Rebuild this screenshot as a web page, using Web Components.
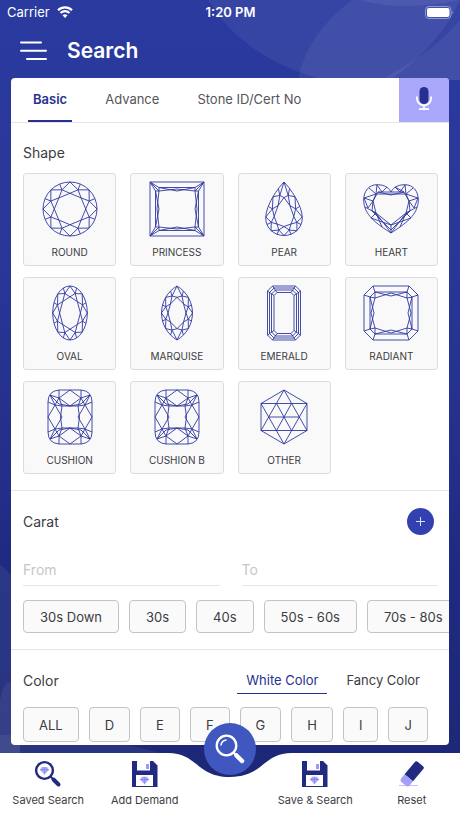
<!DOCTYPE html>
<html lang="en">
<head>
<meta charset="utf-8">
<meta name="viewport" content="width=device-width, initial-scale=1">
<title>Search</title>
<style>
  html, body { height:100%; margin:0; }
  body {
    --navy:#26318f; --ink:#3c3c42; --line:#e6e6ea;
    font-family:Inter, "Liberation Sans", sans-serif; font-size:14px; color:var(--ink);
    background:#1d2876;
  }
</style>
</head>
<body>
<search-app></search-app>

<script>
(function () {
  /* ---- gem outlines, all on a 56x56 box ---- */
  const pt = p => p[0].toFixed(1) + ' ' + p[1].toFixed(1);
  const line = (...p) => 'M' + p.map(pt).join('L');
  const lerp = (c, p, k) => [c[0] + (p[0] - c[0]) * k, c[1] + (p[1] - c[1]) * k];

  // 16 girdle points -> kites, star facets and table
  function brilliant(girdle, c, table) {
    let d = '';
    for (let i = 0; i < 16; i += 2) {
      const next = (i + 2) % 16;
      const m = lerp(c, girdle[i + 1], (1 + table) / 2 - .02);
      const a = lerp(c, girdle[i], table), b = lerp(c, girdle[next], table);
      d += line(girdle[i], m, girdle[next]) + line(a, m, b) + line(a, b) + line(m, girdle[i + 1]);
    }
    return d;
  }
  function ellipse(rx, ry) {
    return Array.from({ length: 16 }, (_, i) => {
      const t = i * Math.PI / 8;
      return [28 + rx * Math.sin(t), 28 - ry * Math.cos(t)];
    });
  }
  const mirror = right => right.concat(right.slice(1, -1).reverse().map(p => [56 - p[0], p[1]]));
  const marquise = mirror(Array.from({ length: 9 }, (_, i) => {
    const t = (-60 + i * 15) * Math.PI / 180;
    return [12.3 + 31.3 * Math.cos(t), 28 + 31.2 * Math.sin(t)];
  }));
  const pear = mirror([[28,1],[33.6,7.5],[39,15.8],[43.5,25.5],[46.2,36],[45,43.5],[41,49.8],[35,53.6],[28,54.5]]);
  const octagon = (x, y, k) => {
    const X = 56 - x, Y = 56 - y;
    return `M${x + k} ${y}H${X - k}L${X} ${y + k}V${Y - k}L${X - k} ${Y}H${x + k}L${x} ${Y - k}V${y + k}Z`;
  };

  const CUSHION = `M17 1H39Q50 2 50 13V43Q50 54 39 55H17Q6 54 6 43V13Q6 2 17 1Z
    M28 1 17 9 28 17 39 9ZM28 55 17 47 28 39 39 47Z
    M6 28 13 16 20 28 13 40ZM50 28 43 16 36 28 43 40Z
    M20 17H36L37.5 28 36 39H20L18.5 28Z
    M28 17 17 15 8 6 13 16 20 17 17 9 17 1M28 17 39 15 48 6 43 16 36 17 39 9 39 1
    M28 39 17 41 8 50 13 40 20 39 17 47 17 55M28 39 39 41 48 50 43 40 36 39 39 47 39 55
    M6 13 13 16 17 9 8 6M50 13 43 16 39 9 48 6M6 43 13 40 17 47 8 50M50 43 43 40 39 47 48 50`;

  const GEMS = {
    round: 'M28 1A27 27 0 1 1 28 55A27 27 0 1 1 28 1' + brilliant(ellipse(27, 27), [28, 28], .58),
    princess: `M1 1H55V55H1ZM10 6.500H46M10 49.500H46M6.500 10V46M49.500 10V46
      M1 1 6.500 10M1 1 10 6.500M55 1 46 6.500M55 1 49.500 10M1 55 6.500 46M1 55 10 49.500M55 55 46 49.500M55 55 49.500 46
      M1 1 10 10M55 1 46 10M1 55 10 46M55 55 46 46
      M10 6.500 10 10 28 8 46 10 46 6.500M10 49.500 10 46 28 48 46 46 46 49.500
      M6.500 10 10 10 8 28 10 46 6.500 46M49.500 10 46 10 48 28 46 46 49.500 46
      M10 6.500 28 10 46 6.500M10 49.500 28 46 46 49.500M6.500 10 10 28 6.500 46M49.500 10 46 28 49.500 46`,
    pear: 'M28 1C34 7 46.300 24 46.300 37C46.300 47 38 54.500 28 54.500C18 54.500 9.700 47 9.700 37C9.700 24 22 7 28 1Z'
      + brilliant(pear, [28, 35], .54),
    heart: `M28 11C31 5 37 3.700 42 3.700C50 3.700 55.300 10 55.300 19C55.300 34 42 43 28 52C14 43 .7 34 .7 19C.7 10 6 3.700 14 3.700C19 3.700 25 5 28 11Z
      M13 13H43L46 20 43 32 28 44 13 32 10 20Z
      M28 11 15 11 10 20 1 17 13 13 6 7M13 13 14 4 19 11 24 6M15 11 28 14 41 11 32 6 37 11 42 4 43 13 50 7
      M28 11 41 11 46 20 55 17 43 13
      M1 17 5 27 10 20M55 17 51 27 46 20M2 26 13 32 8 37M54 26 43 32 48 37
      M10 20 9 30 28 49 47 30 46 20M13 32 19 46M43 32 37 46
      M13 32 28 52 43 32M9 30 13 32M47 30 43 32M28 44V52M8 37 28 44 48 37`,
    oval: 'M28 1A17.300 27 0 1 1 28 55A17.300 27 0 1 1 28 1' + brilliant(ellipse(17.3, 27), [28, 28], .6),
    marquise: 'M28 1A31.300 31.300 0 0 1 28 55A31.300 31.300 0 0 1 28 1' + brilliant(marquise, [28, 28], .58),
    emerald: octagon(11.5, 1, 5) + octagon(13.5, 3, 4.5) + octagon(15.5, 5, 4) + octagon(18, 7.5, 3)
      + `M11.500 6 18 10.500M16.500 1 21 7.500M44.500 6 38 10.500M39.500 1 35 7.500
         M11.500 50 18 45.500M16.500 55 21 48.500M44.500 50 38 45.500M39.500 55 35 48.500`,
    radiant: octagon(1, 1, 9) + octagon(7, 7, 5)
      + `M1 10 7 12 12 13 12 7 10 1M46 1 44 7V13L49 12 55 10M1 46 7 44 12 43V49L10 55M46 55 44 49V43L49 44 55 46
         M12 7 28 11 44 7M12 13 28 8 44 13M12 49 28 45 44 49M12 43 28 48 44 43
         M7 12 11 28 7 44M12 13 8 28 12 43M49 12 45 28 49 44M44 13 48 28 44 43`,
    cushion: CUSHION,
    other: `M28 1 51 14.500V41.500L28 55 5 41.500V14.500ZM28 1 5 41.500H51ZM28 55 5 14.500H51Z
      M12.500 28H43.500M20.500 14.500 35.500 41.500M35.500 14.500 20.500 41.500`
  };

  const SMALL_GEM = `<path d="M-2.500 -3.500H2.500L4.500 -.8 0 4 -4.500 -.8Z" fill="#a9a6f9"/>
    <path d="M-4.500 -.8H4.500" stroke="#7d7ae0" stroke-width=".7" fill="none"/>
    <path d="M0 -3.500V4" stroke="#7d7ae0" stroke-width=".5"/>`;

  const ICONS = {
    saved: `<svg viewBox="0 0 26 26" aria-hidden="true">
      <circle cx="9.500" cy="9.500" r="8.400" fill="#fff" stroke="#202a80" stroke-width="2.400"/>
      <path d="M15.500 15.500 18.500 18.500" stroke="#202a80" stroke-width="2"/>
      <path d="M18.500 18.500 23.500 23.500" stroke="#202a80" stroke-width="4" stroke-linecap="round"/>
      <g transform="translate(9.500 9.500)">${SMALL_GEM}</g></svg>`,

    floppy: `<svg viewBox="0 0 26 26" aria-hidden="true">
      <path d="M0 0H21L25.500 4.500V26H0Z" fill="#202a80"/>
      <path d="M5 0H18V9.500H5Z" fill="#fff"/><path d="M14 3H17V8H14Z" fill="#9c99f4"/>
      <path d="M4 14H21V25H4Z" fill="#fff"/><g transform="translate(12.500 19.300)">${SMALL_GEM}</g></svg>`,

    eraser: `<svg viewBox="0 0 26 26" aria-hidden="true">
      <path d="M0 24.500H19" stroke="#c3c1fb" stroke-width="1"/>
      <g transform="rotate(-50 13 13)">
        <path d="M8 7.500H24Q26 7.500 26 9.500V16.500Q26 18.500 24 18.500H8Z" fill="#202a80"/>
        <path d="M8 7.500H3Q0 7.500 0 10.500V15.500Q0 18.500 3 18.500H8Z" fill="#a39ffa"/></g></svg>`
  };

  function define(name, markup, init) {
    const tpl = document.createElement('template');
    tpl.innerHTML = markup;
    customElements.define(name, class extends HTMLElement {
      constructor() {
        super();
        this.attachShadow({ mode: 'open' }).appendChild(tpl.content.cloneNode(true));
      }
      connectedCallback() { if (init) init.call(this, this.shadowRoot); }
    });
  }

  define('status-bar', `
    <style>
      :host { display:grid; grid-template-columns:1fr auto 1fr; align-items:center; height:24px; padding:0 6px 0 7px; color:#fff; font-size:13px; }
      .net { display:flex; align-items:center; gap:7px; }
      .time { font-weight:600; }
      .bat { justify-self:end; }
      svg { display:block; }
    </style>
    <div class="net"><span>Carrier</span>
      <svg width="16" height="12" viewBox="0 0 16 12" fill="none" stroke="#fff" stroke-width="2.200" aria-hidden="true">
        <path d="M1 4.200A10 10 0 0 1 15 4.200M3.500 7A6.500 6.500 0 0 1 12.500 7"/>
        <path d="M8 12 5.500 9.300Q8 7.400 10.500 9.300Z" fill="#fff" stroke="none"/></svg></div>
    <div class="time">1:20 PM</div>
    <svg class="bat" width="29" height="13" viewBox="0 0 29 13" aria-hidden="true">
      <rect x=".5" y=".5" width="25.500" height="12" rx="3.500" fill="none" stroke="#8f99d3"/>
      <rect x="2" y="2" width="22.500" height="9" rx="2" fill="#fff"/>
      <path d="M27.500 4.500Q29 6.500 27.500 8.500Z" fill="#8f99d3"/></svg>`);

  define('page-title', `
    <style>
      :host { display:flex; align-items:center; gap:19px; height:54px; padding:0 20px; color:#fff; }
      button { display:block; border:0; padding:0; background:none; color:inherit; }
      svg { display:block; }
      h1 { margin:0; font-size:21px; line-height:24px; font-weight:600; }
    </style>
    <button type="button" aria-label="Menu">
      <svg width="28" height="20" viewBox="0 0 28 20" stroke="#fff" stroke-width="2" stroke-linecap="round" aria-hidden="true">
        <path d="M1 1.500H21M1 9.700H26M7 18H26"/></svg></button>
    <h1><slot></slot></h1>`);

  define('tab-strip', `
    <style>
      :host { display:flex; height:44px; border-bottom:1px solid var(--line); }
      nav { flex:1; display:flex; gap:28px; padding-left:17px; }
      button { border:0; background:none; font:inherit; font-size:13px; color:#55555b; padding:0 5px 2px; white-space:nowrap; }
      .on { color:var(--navy); font-weight:600; padding-bottom:0; border-bottom:2px solid var(--navy); }
      .mic { width:50px; display:grid; place-items:center; background:#aaa8fa; }
    </style>
    <nav>
      <button type="button" class="on">Basic</button>
      <button type="button">Advance</button>
      <button type="button">Stone ID/Cert No</button>
    </nav>
    <button type="button" class="mic" aria-label="Voice search">
      <svg width="16" height="24" viewBox="0 0 16 24" fill="none" aria-hidden="true">
        <rect x="3.500" y="0" width="9" height="17" rx="4.500" fill="#26318f"/>
        <path d="M1 9.500V11.500A7 7 0 0 0 15 11.500V9.500M8 18.500V22M3 22.200H13" stroke="#fff" stroke-width="1.800"/></svg></button>`);

  define('filter-section', `
    <style>
      :host { display:block; padding:0 11px 0 12px; border-bottom:1px solid var(--line); }
      :host([last]) { border-bottom:0; }
      header { display:flex; align-items:center; justify-content:space-between; }
      h2 { margin:0; font-size:14px; line-height:20px; font-weight:400; }
    </style>
    <header><h2></h2><slot name="tool"></slot></header>
    <slot></slot>`, function (r) {
      r.querySelector('h2').textContent = this.getAttribute('heading');
    });

  define('shape-tile', `
    <style>
      :host { display:block; }
      button {
        display:flex; flex-direction:column; align-items:center; gap:8px; width:100%; height:93px; box-sizing:border-box;
        padding:7px 0 0; border:1px solid #dcdce0; border-radius:3px; background:#f9f9fa;
        font:inherit; font-size:10px; line-height:14px; color:var(--ink);
      }
      svg { display:block; width:56px; height:56px; fill:none; stroke:#2f389f; stroke-width:.9; stroke-linejoin:round; }
    </style>
    <button type="button"><svg viewBox="0 0 56 56" aria-hidden="true"><path/></svg><slot></slot></button>`, function (r) {
      r.querySelector('path').setAttribute('d', GEMS[this.getAttribute('gem')]);
    });

  define('range-field', `
    <style>
      :host { display:block; flex:1; min-width:0; }
      input {
        display:block; width:100%; box-sizing:border-box; height:32px; padding:0; border:0; border-radius:0;
        border-bottom:1px solid var(--line); background:none; outline:0; font:inherit; color:inherit;
      }
      input::placeholder { color:#c6c6ca; opacity:1; }
    </style>
    <input type="text" inputmode="decimal">`, function (r) {
      const input = r.querySelector('input');
      input.placeholder = this.getAttribute('label');
      input.setAttribute('aria-label', 'Carat ' + this.getAttribute('label'));
    });

  define('chip-row', `
    <style>
      :host { display:flex; gap:10px; overflow:hidden; }
      button {
        flex:none; height:var(--chip-h, 33px); padding:0 var(--chip-pad, 16px); border:1px solid #c4c4c8; border-radius:4px;
        background:#fafafa; font:inherit; font-size:13px; color:var(--ink); white-space:nowrap;
      }
    </style>`, function (r) {
      for (const text of this.getAttribute('items').split(',')) {
        const b = document.createElement('button');
        b.type = 'button';
        b.textContent = text;
        r.appendChild(b);
      }
    });

  define('round-plus', `
    <style>
      :host { display:block; }
      button { display:grid; place-items:center; width:27px; height:27px; padding:0; border:0; border-radius:50%; background:#3341b0; }
    </style>
    <button type="button" aria-label="Add carat range">
      <svg width="11" height="11" viewBox="0 0 11 11" stroke="#dfe1f7" stroke-width="1" aria-hidden="true"><path d="M5.500 1V10M1 5.500H10"/></svg></button>`);

  define('color-switch', `
    <style>
      :host { display:flex; gap:10px; }
      button { height:27px; border:0; border-bottom:1px solid transparent; background:none; padding:0 9px; font:inherit; font-size:13px; color:var(--ink); }
      .on { color:var(--navy); border-color:var(--navy); }
    </style>
    <button type="button" class="on">White Color</button><button type="button">Fancy Color</button>`);

  define('bar-item', `
    <style>
      :host { display:block; }
      button {
        display:flex; flex-direction:column; align-items:center; gap:5px; width:100%; padding:8px 0 0; border:0;
        background:none; font:inherit; font-size:11px; line-height:16px; color:var(--ink); white-space:nowrap;
      }
      svg { display:block; width:26px; height:26px; overflow:visible; }
    </style>
    <button type="button"><span></span><slot></slot></button>`, function (r) {
      r.querySelector('span').innerHTML = ICONS[this.getAttribute('icon')];
    });

  define('bottom-bar', `
    <style>
      :host { position:relative; display:block; height:65px; }
      .skin { position:absolute; inset:0; display:flex; }
      .skin i { flex:1; background:#fff; }
      .skin svg { display:block; width:140px; height:65px; }
      nav { position:relative; display:grid; grid-template-columns:1fr 1fr 74px 1fr 1fr; }
      .find {
        position:absolute; left:50%; top:-30px; margin-left:-26px; width:52px; height:52px; padding:0;
        display:grid; place-items:center; border:0; border-radius:50%; background:#3f57bf;
      }
    </style>
    <div class="skin"><i></i>
      <svg viewBox="0 0 140 65" aria-hidden="true"><path d="M0 0H8C38 0 36 24 70 24S102 0 132 0H140V65H0Z" fill="#fff"/></svg>
      <i></i></div>
    <nav>
      <bar-item icon="saved">Saved Search</bar-item>
      <bar-item icon="floppy">Add Demand</bar-item>
      <span></span>
      <bar-item icon="floppy">Save &amp; Search</bar-item>
      <bar-item icon="eraser">Reset</bar-item>
    </nav>
    <button type="button" class="find" aria-label="Search">
      <svg width="30" height="30" viewBox="0 0 30 30" fill="none" stroke="#fff" aria-hidden="true">
        <circle cx="11.500" cy="11.500" r="9.800" stroke-width="2.300"/>
        <path d="M6 11A6 6 0 0 1 11 6" stroke-width="1.500" stroke-linecap="round"/>
        <path d="M18.500 18.500 22 22" stroke-width="2.300"/><path d="M21.500 21.500 27 27" stroke-width="4.500" stroke-linecap="round"/></svg></button>`);

  define('search-app', `
    <style>
      :host { position:relative; display:flex; flex-direction:column; height:100vh; overflow:hidden;
        background:linear-gradient(#2a3a9f, #2b3798 30%, #1e2a80 72%, #1c2774); }
      .art { position:absolute; inset:0; width:100%; height:100%; }
      status-bar, page-title, main, bottom-bar { position:relative; flex:none; }
      main { flex:1; min-height:0; margin:0 11px 8px; border-radius:4px; background:#fff; overflow:hidden; }
      .shapes { display:grid; grid-template-columns:repeat(4, 1fr); gap:11px 14px; padding:10px 0 16px; }
      .shape { padding-top:20px; }
      .carat { padding-top:17px; padding-bottom:16px; }
      .carat round-plus { margin-right:4px; }
      .fields { display:flex; gap:22px; padding:19px 0 14px; }
      .carat chip-row { margin-right:-11px; }
      .color { padding-top:17px; }
      .color color-switch { margin-right:9px; }
      .color chip-row { --chip-h:35px; --chip-pad:15px; padding-top:13px; }
    </style>
    <svg class="art" viewBox="0 0 460 818" preserveAspectRatio="none" aria-hidden="true">
      <g fill="#fff" fill-opacity=".06">
        <path d="M208 0Q245 60 325 80H460V0Z"/>
        <path d="M352 0Q306 35 298 80H390Q440 45 460 0Z"/>
        <path d="M360 0Q400 12 460 0ZM460 20Q430 55 380 80H460Z"/>
        <path d="M0 565Q10 570 20 590V753H0Z"/>
        <path d="M0 700Q6 670 20 690V753H0Z"/>
        <path d="M0 753V735Q80 730 160 753Z"/>
      </g>
    </svg>
    <status-bar></status-bar>
    <page-title>Search</page-title>
    <main>
      <tab-strip></tab-strip>
      <filter-section class="shape" heading="Shape">
        <div class="shapes">
          <shape-tile gem="round">ROUND</shape-tile>
          <shape-tile gem="princess">PRINCESS</shape-tile>
          <shape-tile gem="pear">PEAR</shape-tile>
          <shape-tile gem="heart">HEART</shape-tile>
          <shape-tile gem="oval">OVAL</shape-tile>
          <shape-tile gem="marquise">MARQUISE</shape-tile>
          <shape-tile gem="emerald">EMERALD</shape-tile>
          <shape-tile gem="radiant">RADIANT</shape-tile>
          <shape-tile gem="cushion">CUSHION</shape-tile>
          <shape-tile gem="cushion">CUSHION B</shape-tile>
          <shape-tile gem="other">OTHER</shape-tile>
        </div>
      </filter-section>
      <filter-section class="carat" heading="Carat">
        <round-plus slot="tool"></round-plus>
        <div class="fields"><range-field label="From"></range-field><range-field label="To"></range-field></div>
        <chip-row items="30s Down,30s,40s,50s - 60s,70s - 80s"></chip-row>
      </filter-section>
      <filter-section class="color" heading="Color" last>
        <color-switch slot="tool"></color-switch>
        <chip-row items="ALL,D,E,F,G,H,I,J,"></chip-row>
      </filter-section>
    </main>
    <bottom-bar></bottom-bar>`);
})();
</script>
</body>
</html>
